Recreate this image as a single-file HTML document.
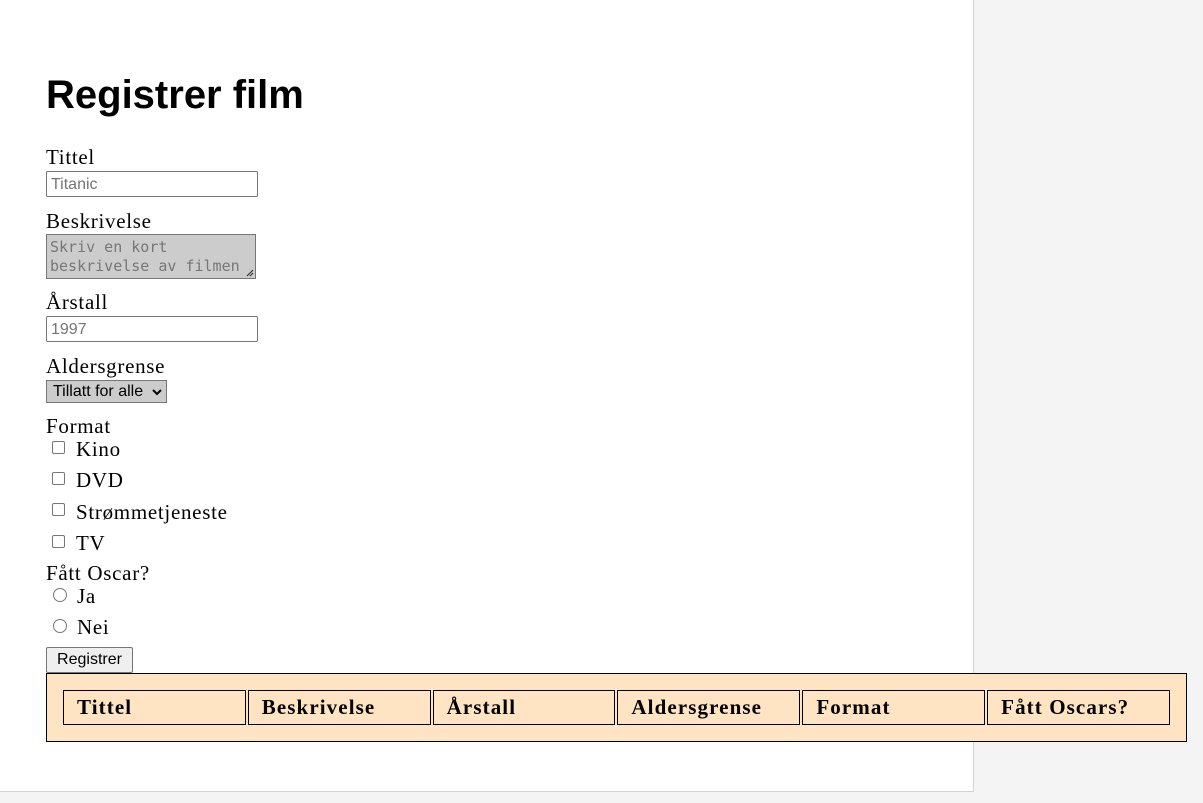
<!DOCTYPE html>
<html><head><meta charset="utf-8"><style>
*{box-sizing:border-box;margin:0;padding:0}
body{width:1203px;height:803px;background:#f4f4f4;position:relative;overflow:hidden;font-family:"Liberation Serif",serif;font-size:20px;letter-spacing:0.7px;color:#000}
#wrap{position:absolute;left:0;top:0;width:974px;height:792px;background:#fff;border-right:1px solid #d4d4d4;border-bottom:1px solid #d4d4d4}
.a{position:absolute;white-space:nowrap;line-height:1;font-size:21px}
h1{position:absolute;left:46px;top:75px;font:bold 40px "Liberation Sans",sans-serif;line-height:1;letter-spacing:0}
.in{position:absolute;left:46px;width:212px;height:26px;border:1px solid #767676;border-radius:2px;background:#fff;font:16px "Liberation Sans",sans-serif;letter-spacing:0;color:#757575;padding:3px 4px;line-height:19px}
.cb{position:absolute;left:52px;width:13px;height:13px;border:1px solid #767676;border-radius:2px;background:#fff}
.rb{position:absolute;left:53px;width:14px;height:14px;border:1px solid #767676;border-radius:50%;background:#fff}
table{position:absolute;left:46px;top:673px;width:1141px;height:68px;background:#ffe4c4;border:1px solid #000;border-spacing:2px;padding:14px 14px}
th{border:1px solid #000;text-align:left;font-weight:bold;font-size:21px;letter-spacing:1.1px;padding:0 13px;height:35px;width:183px}
</style></head><body>
<div id="wrap"></div>
<h1>Registrer film</h1>
<div class="a" style="left:46px;top:147px">Tittel</div>
<div class="in" style="top:171px">Titanic</div>
<div class="a" style="left:46px;top:211px">Beskrivelse</div>
<div style="position:absolute;left:46px;top:234px;width:210px;height:45px;background:#ccc;border:1px solid #767676;font:15px 'DejaVu Sans Mono',monospace;letter-spacing:0;color:#777;padding:3px 3px;line-height:19px">Skriv en kort<br>beskrivelse av filmen<svg style="position:absolute;right:1px;bottom:1px" width="8" height="8"><path d="M1 7L7 1M4 7L7 4" stroke="#333" stroke-width="1.2"/></svg></div>
<div class="a" style="left:46px;top:292px">Årstall</div>
<div class="in" style="top:316px">1997</div>
<div class="a" style="left:46px;top:356px">Aldersgrense</div>
<div style="position:absolute;left:46px;top:380px;width:121px;height:23px;background:#ccc;border:1px solid #767676;font:16px 'Liberation Sans',sans-serif;letter-spacing:0;padding:2px 6px;line-height:18px">Tillatt for alle<svg style="position:absolute;right:4px;top:8px" width="10" height="7"><path d="M1 1L5 5L9 1" stroke="#000" stroke-width="2" fill="none"/></svg></div>
<div class="a" style="left:46px;top:416px">Format</div>
<div class="cb" style="top:441px"></div><div class="a" style="left:76px;top:439px">Kino</div>
<div class="cb" style="top:472px"></div><div class="a" style="left:76px;top:470px">DVD</div>
<div class="cb" style="top:503px"></div><div class="a" style="left:76px;top:502px">Strømmetjeneste</div>
<div class="cb" style="top:535px"></div><div class="a" style="left:76px;top:533px">TV</div>
<div class="a" style="left:46px;top:563px">Fått Oscar?</div>
<div class="rb" style="top:588px"></div><div class="a" style="left:77px;top:586px">Ja</div>
<div class="rb" style="top:619px"></div><div class="a" style="left:77px;top:617px">Nei</div>
<div style="position:absolute;left:46px;top:647px;width:87px;height:26px;background:#efefef;border:1px solid #767676;border-radius:2px;font:16px 'Liberation Sans',sans-serif;letter-spacing:0;text-align:center;line-height:24px">Registrer</div>
<table><tr><th>Tittel</th><th>Beskrivelse</th><th>Årstall</th><th>Aldersgrense</th><th>Format</th><th>Fått Oscars?</th></tr></table>
</body></html>
